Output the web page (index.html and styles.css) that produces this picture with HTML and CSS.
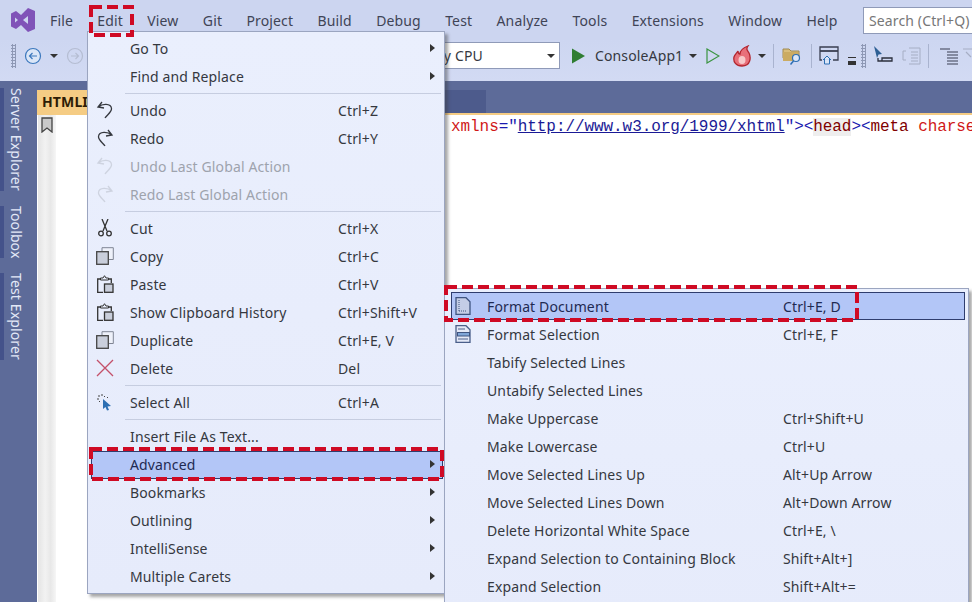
FILE: index.html
```html
<!DOCTYPE html>
<html lang="en">
<head>
    <meta charset="UTF-8">
    <title>Visual Studio - Edit menu</title>
    <link rel="stylesheet" href="styles.css">
</head>
<body>
    <!-- shared icons -->
    <svg class="defs" width="0" height="0">
        <symbol id="i-undo" viewBox="0 0 18 18"><path d="M6 1 2 6l6 1M2.500 6C6 2.500 15 2 15.500 7.500 15.800 11 11 14 9 17" fill="none" stroke="currentColor" stroke-width="1.300"/></symbol>
        <symbol id="i-redo" viewBox="0 0 18 18"><path d="M12 1l4 5-6 1M15.500 6C12 2.500 3 2 2.500 7.500 2.200 11 7 14 9 17" fill="none" stroke="currentColor" stroke-width="1.300"/></symbol>
        <symbol id="i-cut" viewBox="0 0 18 18"><g fill="none" stroke="#333" stroke-width="1.300"><path d="M6 0l5 12M12 0 7 12"/><circle cx="5" cy="14.500" r="2.300"/><circle cx="13" cy="14.500" r="2.300"/></g></symbol>
        <symbol id="i-copy" viewBox="0 0 18 18"><path d="M6 4V.7h11.300v11.800H13" fill="#eef1fa" stroke="#7f8594"/><rect x=".7" y="4.700" width="11.600" height="12.600" fill="#c9cedb" stroke="#444" stroke-width="1.300"/></symbol>
        <symbol id="i-paste" viewBox="0 0 18 18"><path d="M5 4H1.700v13.300H7M12 4h3.300v4" fill="none" stroke="#333" stroke-width="1.300"/><path d="M4.500 5V3h2.500l1.500-2.300L10 3h2.500v2z" fill="#e8edfb" stroke="#333"/><rect x="8.500" y="9" width="8.500" height="8.300" fill="#c9cedb" stroke="#333" stroke-width="1.300"/></symbol>
        <symbol id="i-doc" viewBox="0 0 18 18"><path d="M2 .7h10l4 4v12.600H2z" fill="#c4cde6" stroke="#3f5480" stroke-width="1.300"/><path d="M5 14h8" stroke="#3f5480" stroke-dasharray="1 1"/><path d="M5 3v11" stroke="#3f5480" stroke-dasharray="1 1"/></symbol>
        <symbol id="i-docsel" viewBox="0 0 18 18"><path d="M2 .7h10l4 4v12.600H2z" fill="#e4e9f7" stroke="#4a5f8a" stroke-width="1.300"/><path d="M4 4h7M4 14h10" stroke="#4a5f8a"/><rect x="3.500" y="7.500" width="12" height="3.500" fill="#7fa6d8" stroke="#3f5480"/></symbol>
    </svg>

    <div class="menubar">
        <svg class="logo" viewBox="0 0 24 24"><path d="M17 0 24 3v18l-7 3-7-7-5 4-5-2.500V5.500L5 3l5 4zM4 9.500v5L7 12zM12 12l5 4V8z" fill="#8053b8" fill-rule="evenodd"/></svg>
        <div class="menu-items">
            <span>File</span>
            <span>Edit</span>
            <span>View</span>
            <span>Git</span>
            <span>Project</span>
            <span>Build</span>
            <span>Debug</span>
            <span>Test</span>
            <span>Analyze</span>
            <span>Tools</span>
            <span>Extensions</span>
            <span>Window</span>
            <span>Help</span>
        </div>
        <div class="search">Search (Ctrl+Q)</div>
    </div>

    <div class="toolbar">
        <span class="grip"></span>
        <svg class="tool back" viewBox="0 0 18 18"><circle cx="9" cy="9" r="7.500" fill="#dbe6f7" stroke="#3c78bd" stroke-width="1.200"/><path d="M13 9H5.500M8.500 6 5.500 9l3 3" fill="none" stroke="#3c78bd" stroke-width="1.200"/></svg>
        <span class="caret caret-back"></span>
        <svg class="tool fwd" viewBox="0 0 18 18"><circle cx="9" cy="9" r="7.500" fill="none" stroke="#b5bdd2" stroke-width="1.200"/><path d="M5 9h7.500M9.500 6l3 3-3 3" fill="none" stroke="#b5bdd2" stroke-width="1.200"/></svg>
        <div class="combo"><span>Any CPU</span><span class="caret"></span></div>
        <svg class="tool play" viewBox="0 0 14 16"><path d="M0 0 14 8 0 16z" fill="#2f7d32"/></svg>
        <span class="run-name">ConsoleApp1</span>
        <span class="caret caret-run"></span>
        <svg class="tool play-out" viewBox="0 0 14 16"><path d="M1 1 13 8 1 15z" fill="none" stroke="#3a9440" stroke-width="1.200"/></svg>
        <svg class="tool fire" viewBox="0 0 20 22"><path d="M10 21C4 21 1 17 2 12c1-3 3-4 4-6 0 2 1 3 2 3 0-4 3-6 8-8-2 3-1 4 1 7 2 4 2 13-7 13z" fill="#e8707a" stroke="#b3262f" stroke-width="1.300"/><ellipse cx="10" cy="15" rx="3.500" ry="4" fill="#f7c9c9"/></svg>
        <span class="caret caret-fire"></span>
        <span class="sep-v sep-one"></span>
        <svg class="tool folder" viewBox="0 0 20 20"><path d="M1 3h6l2 2h8v7H1z" fill="#d9bd7a" stroke="#a08a50"/><rect x="1" y="6" width="15" height="9" fill="#cbab62"/><circle cx="14" cy="12" r="3.500" fill="#dbe6f7" stroke="#2d6fb3" stroke-width="1.200"/><path d="M11.500 15 8.500 18.500" stroke="#2d6fb3" stroke-width="1.500"/></svg>
        <span class="sep-v sep-two"></span>
        <svg class="tool window" viewBox="0 0 20 20"><path d="M3 14H1V1h18v13h-5" fill="none" stroke="#3a3f52" stroke-width="1.300"/><path d="M1 5h18" stroke="#3a3f52" stroke-width="1.800"/><path d="M4 14l4-4 4 4M5.500 13v5h5v-5" fill="#dbe6f7" stroke="#2d6fb3"/></svg>
        <span class="overflow"></span>
        <span class="grip grip-right"></span>
        <svg class="tool pointer" viewBox="0 0 20 20"><path d="M1 0l8 8-3.500.5L4 12z" fill="#2d5f94"/><path d="M5 12v3h14v-3H9v3" fill="none" stroke="#2b2f3d" stroke-width="1.300"/></svg>
        <svg class="tool ghost" viewBox="0 0 20 20"><path d="M7 2h11v16H7M4 5H1v9h3M9 6h7M9 9h7M9 12h7M9 15h7" fill="none" stroke="#a6aec4"/></svg>
        <span class="sep-v sep-three"></span>
        <svg class="tool indent" viewBox="0 0 20 18"><path d="M1 2h10M8 5h11M8 8h11M8 11h11M8 14h11M8 17h11" stroke="#3a3f52" stroke-width="1.200"/></svg>
        <svg class="tool ghost-end" viewBox="0 0 10 18"><path d="M0 2h10M3 5l5 5" stroke="#a6aec4" stroke-width="1.200"/></svg>
    </div>

    <div class="workspace">
        <div class="side-rail">
            <span class="rail-tab rail-server">Server Explorer</span>
            <span class="rail-tab rail-toolbox">Toolbox</span>
            <span class="rail-tab rail-test">Test Explorer</span>
        </div>
        <div class="doc-area">
            <div class="tab-strip">
                <div class="tab-active">HTMLI</div>
                <div class="tab-other"></div>
            </div>
            <div class="editor">
                <div class="bookmark-margin">
                    <svg class="bookmark" viewBox="0 0 12 16"><path d="M1 1h10v14L6 11l-5 4z" fill="#c9c9c9" stroke="#444" stroke-width="1.300"/></svg>
                </div>
                <div class="code"><span class="c-attr">xmlns</span><span class="c-blue">="</span><span class="c-url">http://www.w3.org/1999/xhtml</span><span class="c-blue">"&gt;&lt;</span><span class="c-tag c-mark">head</span><span class="c-blue">&gt;&lt;</span><span class="c-tag">meta</span> <span class="c-attr">charse</span></div>
            </div>
        </div>
    </div>

    <!-- Edit menu -->
    <div class="menu edit-menu">
        <div class="row"><span class="ico"></span><span class="label">Go To</span><span class="arrow"></span></div>
        <div class="row"><span class="ico"></span><span class="label">Find and Replace</span><span class="arrow"></span></div>
        <div class="divider"></div>
        <div class="row"><span class="ico"><svg><use href="#i-undo"/></svg></span><span class="label">Undo</span><span class="key">Ctrl+Z</span></div>
        <div class="row"><span class="ico"><svg><use href="#i-redo"/></svg></span><span class="label">Redo</span><span class="key">Ctrl+Y</span></div>
        <div class="row off"><span class="ico"><svg><use href="#i-undo"/></svg></span><span class="label">Undo Last Global Action</span></div>
        <div class="row off"><span class="ico"><svg><use href="#i-redo"/></svg></span><span class="label">Redo Last Global Action</span></div>
        <div class="divider"></div>
        <div class="row"><span class="ico"><svg><use href="#i-cut"/></svg></span><span class="label">Cut</span><span class="key">Ctrl+X</span></div>
        <div class="row"><span class="ico"><svg><use href="#i-copy"/></svg></span><span class="label">Copy</span><span class="key">Ctrl+C</span></div>
        <div class="row"><span class="ico"><svg><use href="#i-paste"/></svg></span><span class="label">Paste</span><span class="key">Ctrl+V</span></div>
        <div class="row"><span class="ico"><svg><use href="#i-paste"/></svg></span><span class="label">Show Clipboard History</span><span class="key">Ctrl+Shift+V</span></div>
        <div class="row"><span class="ico"><svg><use href="#i-copy"/></svg></span><span class="label">Duplicate</span><span class="key">Ctrl+E, V</span></div>
        <div class="row"><span class="ico"><svg viewBox="0 0 18 18"><path d="M1 1l16 16M17 1 1 17" stroke="#c4506a" stroke-width="1.300"/></svg></span><span class="label">Delete</span><span class="key">Del</span></div>
        <div class="divider"></div>
        <div class="row"><span class="ico"><svg viewBox="0 0 18 18"><path d="M3 2v2M1 6h2M6 1v2M3 9l1-1M9 3 8 4M12 4l-1 1" stroke="#444" fill="none"/><path d="M7 6l8 7-3.500.5L13 17l-2 .5-1.500-3.500L7 16z" fill="#2d6fb3"/></svg></span><span class="label">Select All</span><span class="key">Ctrl+A</span></div>
        <div class="divider"></div>
        <div class="row"><span class="ico"></span><span class="label">Insert File As Text...</span></div>
        <div class="row on"><span class="ico"></span><span class="label">Advanced</span><span class="arrow"></span></div>
        <div class="row"><span class="ico"></span><span class="label">Bookmarks</span><span class="arrow"></span></div>
        <div class="row"><span class="ico"></span><span class="label">Outlining</span><span class="arrow"></span></div>
        <div class="row"><span class="ico"></span><span class="label">IntelliSense</span><span class="arrow"></span></div>
        <div class="row"><span class="ico"></span><span class="label">Multiple Carets</span><span class="arrow"></span></div>
    </div>

    <!-- Advanced submenu -->
    <div class="menu sub-menu">
        <div class="row on"><span class="ico"><svg><use href="#i-doc"/></svg></span><span class="label">Format Document</span><span class="key">Ctrl+E, D</span></div>
        <div class="row"><span class="ico"><svg><use href="#i-docsel"/></svg></span><span class="label">Format Selection</span><span class="key">Ctrl+E, F</span></div>
        <div class="row"><span class="ico"></span><span class="label">Tabify Selected Lines</span></div>
        <div class="row"><span class="ico"></span><span class="label">Untabify Selected Lines</span></div>
        <div class="row"><span class="ico"></span><span class="label">Make Uppercase</span><span class="key">Ctrl+Shift+U</span></div>
        <div class="row"><span class="ico"></span><span class="label">Make Lowercase</span><span class="key">Ctrl+U</span></div>
        <div class="row"><span class="ico"></span><span class="label">Move Selected Lines Up</span><span class="key">Alt+Up Arrow</span></div>
        <div class="row"><span class="ico"></span><span class="label">Move Selected Lines Down</span><span class="key">Alt+Down Arrow</span></div>
        <div class="row"><span class="ico"></span><span class="label">Delete Horizontal White Space</span><span class="key">Ctrl+E, \</span></div>
        <div class="row"><span class="ico"></span><span class="label">Expand Selection to Containing Block</span><span class="key">Shift+Alt+]</span></div>
        <div class="row"><span class="ico"></span><span class="label">Expand Selection</span><span class="key">Shift+Alt+=</span></div>
    </div>

    <!-- red callouts -->
    <svg class="callout callout-edit"><rect x="2" y="2" width="41" height="28"/></svg>
    <svg class="callout callout-advanced"><rect x="2" y="2" width="351" height="30"/></svg>
    <svg class="callout callout-format"><rect x="2" y="2" width="411" height="33"/></svg>
</body>
</html>
```

FILE: styles.css
```css
* {
    box-sizing: border-box;
}

html, body {
    height: 100%;
}

body {
    margin: 0;
    position: relative;
    overflow: hidden;
    display: flex;
    flex-direction: column;
    font-family: "Noto Sans", "Open Sans", sans-serif;
    font-size: 14px;
    letter-spacing: 0.13px;
    color: #35383f;
    background: #fff;
}

.defs {
    position: absolute;
}

/* Menu bar */
.menubar {
    height: 40px;
    flex: none;
    display: flex;
    align-items: center;
    padding-left: 11px;
    background: #ccd5f0;
    color: #3f4456;
}

.logo {
    width: 24px;
    height: 24px;
    flex: none;
}

.menu-items {
    flex: 1;
    display: flex;
    gap: 24.4px;
    margin-left: 15px;
}

.search {
    width: 109px;
    height: 27px;
    flex: none;
    margin-top: 1px;
    padding: 3px 0 0 5px;
    white-space: nowrap;
    overflow: hidden;
    color: #777;
    background: #fff;
    border: 1px solid #8f9ab8;
    border-right: 0;
}

/* Tool bar */
.toolbar {
    height: 41px;
    flex: none;
    display: flex;
    align-items: center;
    padding: 0 0 10px 11px;
    overflow: hidden;
    background: linear-gradient(#cdd6f1, #d2daf3);
}

.tool {
    flex: none;
}

.grip {
    width: 5px;
    height: 24px;
    flex: none;
    background: radial-gradient(circle, #8e98b5 1px, transparent 1.200px) 0 0 / 3px 3px;
}

.caret {
    width: 0;
    height: 0;
    flex: none;
    border-left: 4px solid transparent;
    border-right: 4px solid transparent;
    border-top: 4px solid #333;
}

.back {
    width: 18px;
    height: 18px;
    margin-left: 8px;
}

.caret-back {
    margin-left: 8px;
}

.fwd {
    width: 18px;
    height: 18px;
    margin-left: 8px;
}

.combo {
    width: 140px;
    height: 27px;
    flex: none;
    margin-left: 336px;
    padding: 0 4px 0 5px;
    display: flex;
    align-items: center;
    justify-content: space-between;
    background: #fff;
    border: 1px solid #8f9ab8;
}

.play {
    width: 13px;
    height: 16px;
    margin-left: 12px;
}

.run-name {
    flex: none;
    margin-left: 10px;
    width: 89px;
}

.caret-run {
    margin-left: 5px;
}

.play-out {
    width: 14px;
    height: 16px;
    margin-left: 9px;
}

.fire {
    width: 20px;
    height: 22px;
    margin-left: 12px;
}

.caret-fire {
    margin-left: 6px;
}

.sep-v {
    width: 1px;
    height: 24px;
    flex: none;
    background: #a9b3cf;
}

.sep-one {
    margin-left: 7px;
}

.folder {
    width: 20px;
    height: 20px;
    margin-left: 8px;
}

.sep-two {
    margin-left: 9px;
}

.window {
    width: 20px;
    height: 20px;
    margin-left: 7px;
}

.overflow {
    width: 8px;
    height: 8px;
    flex: none;
    margin: 10px 0 0 9px;
    border-top: 1px solid #333;
    border-bottom: 4px solid #333;
}

.grip-right {
    margin-left: 5px;
}

.pointer {
    width: 20px;
    height: 20px;
    margin-left: 7px;
}

.ghost {
    width: 20px;
    height: 20px;
    margin-left: 9px;
}

.sep-three {
    margin-left: 6px;
}

.indent {
    width: 20px;
    height: 18px;
    margin-left: 10px;
}

.ghost-end {
    width: 10px;
    height: 18px;
    margin-left: 4px;
}

/* Side rail and editor */
.workspace {
    flex: 1;
    display: flex;
    background: #5d6b99;
    min-height: 0;
}

.side-rail {
    width: 37px;
    flex: none;
    padding-top: 7px;
    display: flex;
    flex-direction: column;
    align-items: flex-start;
    gap: 15px;
}

.rail-tab {
    writing-mode: vertical-rl;
    border-left: 4px solid #44528a;
    color: #e3e8f7;
    line-height: 24px;
    white-space: nowrap;
}

.doc-area {
    flex: 1;
    min-width: 0;
    display: flex;
    flex-direction: column;
}

.tab-strip {
    height: 34px;
    flex: none;
    padding-top: 9px;
    display: flex;
    border-bottom: 2px solid #f5cc84;
}

.tab-active {
    width: 50px;
    padding: 2px 0 0 5px;
    overflow: hidden;
    white-space: nowrap;
    font-weight: 700;
    color: #2e1d05;
    background: #f5cc84;
}

.tab-other {
    width: 399px;
    background: #4d5b8c;
}

.editor {
    flex: 1;
    display: flex;
    background: #fff;
}

.bookmark-margin {
    width: 18px;
    flex: none;
    margin-left: 1px;
    background: linear-gradient(90deg, #e4e4e4, #f2f2f2 40%, #e8e8e8 70%, #f6f6f6);
}

.bookmark {
    width: 12px;
    height: 16px;
    margin: 2px 0 0 3px;
    display: block;
}

.code {
    padding: 2px 0 0 395px;
    font-family: "Liberation Mono", monospace;
    font-size: 16px;
    letter-spacing: -0.07px;
    line-height: 20px;
    white-space: nowrap;
    overflow: hidden;
}

.c-attr {
    color: #d01818;
}

.c-blue {
    color: #1a1ab0;
}

.c-url {
    color: #1a1a96;
    text-decoration: underline;
}

.c-tag {
    color: #800000;
}

.c-mark {
    background: #eeeeee;
}

/* Drop down menus */
.menu {
    position: absolute;
    background: linear-gradient(#eaeffd, #e6ebfb);
    border: 1px solid #9ba5c0;
    box-shadow: 3px 3px 3px rgba(60, 60, 60, 0.45);
}

.edit-menu {
    left: 87px;
    top: 31px;
    width: 358px;
    height: 563px;
    padding: 3px 1px 0 3px;
}

.edit-menu .row {
    padding-bottom: 2px;
}

.sub-menu {
    left: 444px;
    top: 288px;
    width: 525px;
    height: 330px;
    padding: 3px 3px 0 6px;
}

.row {
    height: 28px;
    display: flex;
    align-items: center;
    border: 1px solid transparent;
}

.row.on {
    background: #b3c6f7;
    border-color: #2f3d6e;
    color: #1f2a52;
}

.row.off {
    color: #9ea3ad;
}

.ico {
    flex: none;
    width: 38px;
    display: flex;
    justify-content: center;
    padding-right: 12px;
}

.sub-menu .ico {
    width: 35px;
    padding-right: 14px;
}

.ico svg {
    width: 18px;
    height: 18px;
}

.off .ico svg {
    opacity: 0.35;
}

.label {
    flex: none;
    width: 208px;
    white-space: nowrap;
}

.sub-menu .label {
    width: 296px;
}

.key {
    white-space: nowrap;
}

.arrow {
    width: 0;
    height: 0;
    margin-left: auto;
    margin-right: 7px;
    border-top: 4px solid transparent;
    border-bottom: 4px solid transparent;
    border-left: 5px solid #333;
}

.divider {
    height: 1px;
    margin: 2px 2px 3px 34px;
    background: #c6cde0;
}

/* Red dashed boxes */
.callout {
    position: absolute;
}

.callout rect {
    fill: none;
    stroke: #cf0a24;
    stroke-width: 4;
    stroke-dasharray: 11 5;
}

.callout-edit {
    left: 89px;
    top: 5px;
    width: 45px;
    height: 32px;
}

.callout-advanced {
    left: 89px;
    top: 447px;
    width: 355px;
    height: 34px;
}

.callout-format {
    left: 444px;
    top: 285px;
    width: 415px;
    height: 37px;
}
```
